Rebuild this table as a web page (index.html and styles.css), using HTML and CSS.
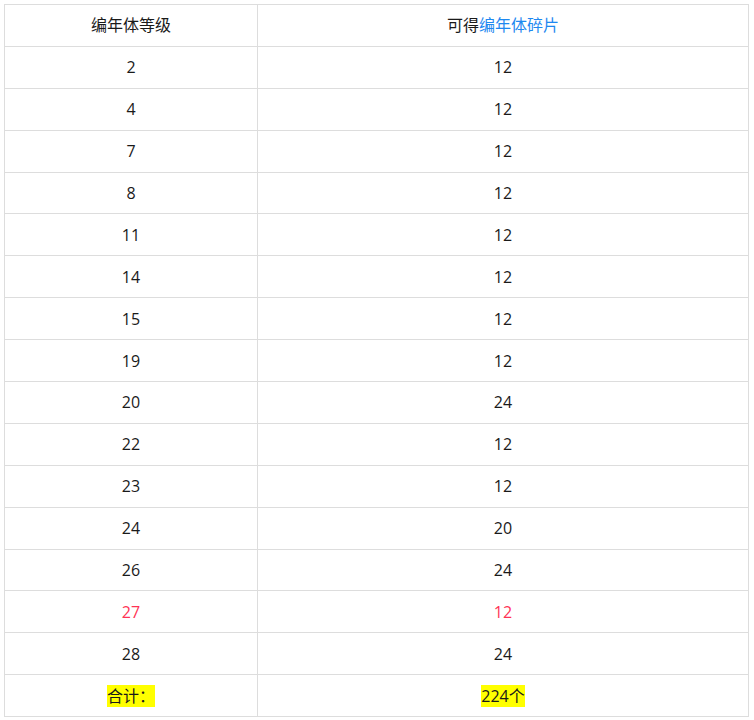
FILE: index.html
```html
<!DOCTYPE html>
<html lang="zh">
<head>
<meta charset="utf-8">
<link rel="stylesheet" href="styles.css">
</head>
<body>
<table class="tbl">
  <colgroup><col class="c1"><col class="c2"></colgroup>
  <tr><td>编年体等级</td><td>可得<span class="link">编年体碎片</span></td></tr>
  <tr><td>2</td><td>12</td></tr>
  <tr><td>4</td><td>12</td></tr>
  <tr><td>7</td><td>12</td></tr>
  <tr><td>8</td><td>12</td></tr>
  <tr><td>11</td><td>12</td></tr>
  <tr><td>14</td><td>12</td></tr>
  <tr><td>15</td><td>12</td></tr>
  <tr><td>19</td><td>12</td></tr>
  <tr><td>20</td><td>24</td></tr>
  <tr><td>22</td><td>12</td></tr>
  <tr><td>23</td><td>12</td></tr>
  <tr><td>24</td><td>20</td></tr>
  <tr><td>26</td><td>24</td></tr>
  <tr class="red"><td>27</td><td>12</td></tr>
  <tr><td>28</td><td>24</td></tr>
  <tr><td><span class="hl">合计：</span></td><td><span class="hl">224个</span></td></tr>
</table>
</body>
</html>
```
FILE: styles.css
```css
html, body { margin: 0; padding: 0; background: #fff; }
body { padding: 4px; font-family: "Open Sans", "Noto Sans CJK SC", sans-serif; font-size: 16px; color: #1a1a1a; }
.tbl { border-collapse: collapse; width: 745px; table-layout: fixed; }
.c1 { width: 253px; }
.tbl td { border: 1px solid #ddd; text-align: center; height: 41.9px; padding: 0; line-height: 20px; box-sizing: border-box; }
.link { color: #1e88f0; }
.red td { color: #ff3355; }
.hl { background: #ffff00; }
```
